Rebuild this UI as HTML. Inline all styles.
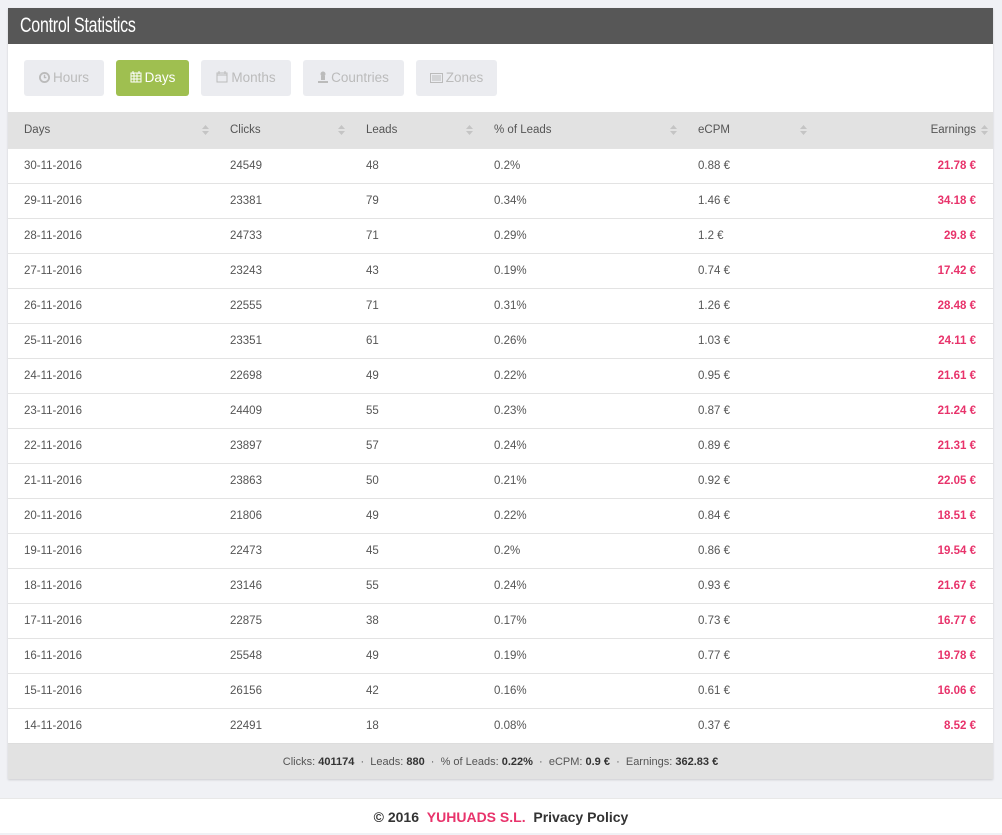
<!DOCTYPE html>
<html><head><meta charset="utf-8"><style>
*{box-sizing:border-box;margin:0;padding:0}
body{width:1002px;height:833px;background:#f0f1f5;font-family:"Liberation Sans",sans-serif;font-size:11.5px;color:#555;position:relative;overflow:hidden}
.panel{position:absolute;left:8px;top:8px;width:985px;background:#fff;box-shadow:0 1px 2px rgba(0,0,0,.15)}
.hdr{height:36px;background:#575757;color:#fff;font-size:21px;line-height:36px;padding-left:12px;position:relative}
.hdr span{display:inline-block;transform:scaleX(0.76);transform-origin:0 50%;letter-spacing:-0.3px}
.btns{height:68px;position:relative}
.b{position:absolute;top:16px;height:36px;border-radius:3px;background:#ebecf0;color:#bbb;font-size:13.5px;line-height:36px;text-align:center}
.b svg{vertical-align:-1px;margin-right:3px}
.b.on{background:#9fbf50;color:#fff}
table{width:985px;border-collapse:collapse;table-layout:fixed}
th{background:#e2e2e2;height:36px;font-weight:normal;text-align:left;color:#555;position:relative;padding-left:16px}
td{height:35px;border-top:1px solid #e3e3e3;padding-left:16px}
.s{position:absolute;top:12px;right:5px;width:7px;height:12px}
td.e,th.e{text-align:right;padding-right:17px;padding-left:0}
td.e{color:#e8336b;font-weight:bold}
.sum{height:36px;background:#e2e2e2;text-align:center;line-height:36px;color:#555;border-top:1px solid #ddd;font-size:11px}
.sum b{color:#333}
.foot{position:absolute;left:0;top:798px;width:1002px;height:35px;background:#fff;border-top:1px solid #e8e8e8;text-align:center;font-size:14px;font-weight:bold;color:#333;line-height:36px}
.foot span{color:#e8336b}
</style></head><body>
<div class="panel">
<div class="hdr"><span>Control Statistics</span></div>
<div class="btns">
<div class="b" style="left:16px;width:80px"><svg width="11" height="11" viewBox="0 0 12 12"><circle cx="6" cy="6" r="5" fill="none" stroke="#bbb" stroke-width="2"/><path d="M6 3v3h2" stroke="#bbb" stroke-width="1.5" fill="none"/></svg>Hours</div>
<div class="b on" style="left:108px;width:73px"><svg width="12" height="12" viewBox="0 0 12 12"><rect x="1" y="2" width="10" height="9" fill="none" stroke="#fff"/><path d="M1 5h10M1 8h10M4 2v9M7 2v9M3 0v3M9 0v3" stroke="#fff"/></svg>Days</div>
<div class="b" style="left:193px;width:90px"><svg width="12" height="12" viewBox="0 0 12 12"><rect x="1" y="2" width="10" height="9" fill="none" stroke="#bbb"/><path d="M1 4h10M3 0v3M9 0v3" stroke="#bbb"/></svg>Months</div>
<div class="b" style="left:295px;width:101px"><svg width="10" height="12" viewBox="0 0 10 12"><circle cx="5" cy="3" r="2.5" fill="#bbb"/><path d="M3 5h4v4H3zM0 10h10v2H0z" fill="#bbb"/></svg>Countries</div>
<div class="b" style="left:408px;width:81px"><svg width="13" height="10" viewBox="0 0 13 10"><rect x=".5" y=".5" width="12" height="9" fill="none" stroke="#bbb"/><path d="M2 3h9M2 5h9M2 7h9" stroke="#bbb"/></svg>Zones</div>
</div>
<table>
<colgroup><col style="width:206px"><col style="width:136px"><col style="width:128px"><col style="width:204px"><col style="width:130px"><col></colgroup>
<tr><th>Days<svg class="s" viewBox="0 0 7 12"><path d="M0 5L3.5 1 7 5zM0 7l3.5 4L7 7z" fill="#c4c4c4"/></svg></th>
<th>Clicks<svg class="s" viewBox="0 0 7 12"><path d="M0 5L3.5 1 7 5zM0 7l3.5 4L7 7z" fill="#c4c4c4"/></svg></th>
<th>Leads<svg class="s" viewBox="0 0 7 12"><path d="M0 5L3.5 1 7 5zM0 7l3.5 4L7 7z" fill="#c4c4c4"/></svg></th>
<th>% of Leads<svg class="s" viewBox="0 0 7 12"><path d="M0 5L3.5 1 7 5zM0 7l3.5 4L7 7z" fill="#c4c4c4"/></svg></th>
<th>eCPM<svg class="s" viewBox="0 0 7 12"><path d="M0 5L3.5 1 7 5zM0 7l3.5 4L7 7z" fill="#c4c4c4"/></svg></th>
<th class="e">Earnings<svg class="s" viewBox="0 0 7 12"><path d="M0 5L3.5 1 7 5zM0 7l3.5 4L7 7z" fill="#c4c4c4"/></svg></th></tr>
<tr><td>30-11-2016</td><td>24549</td><td>48</td><td>0.2%</td><td>0.88 €</td><td class="e">21.78 €</td></tr>
<tr><td>29-11-2016</td><td>23381</td><td>79</td><td>0.34%</td><td>1.46 €</td><td class="e">34.18 €</td></tr>
<tr><td>28-11-2016</td><td>24733</td><td>71</td><td>0.29%</td><td>1.2 €</td><td class="e">29.8 €</td></tr>
<tr><td>27-11-2016</td><td>23243</td><td>43</td><td>0.19%</td><td>0.74 €</td><td class="e">17.42 €</td></tr>
<tr><td>26-11-2016</td><td>22555</td><td>71</td><td>0.31%</td><td>1.26 €</td><td class="e">28.48 €</td></tr>
<tr><td>25-11-2016</td><td>23351</td><td>61</td><td>0.26%</td><td>1.03 €</td><td class="e">24.11 €</td></tr>
<tr><td>24-11-2016</td><td>22698</td><td>49</td><td>0.22%</td><td>0.95 €</td><td class="e">21.61 €</td></tr>
<tr><td>23-11-2016</td><td>24409</td><td>55</td><td>0.23%</td><td>0.87 €</td><td class="e">21.24 €</td></tr>
<tr><td>22-11-2016</td><td>23897</td><td>57</td><td>0.24%</td><td>0.89 €</td><td class="e">21.31 €</td></tr>
<tr><td>21-11-2016</td><td>23863</td><td>50</td><td>0.21%</td><td>0.92 €</td><td class="e">22.05 €</td></tr>
<tr><td>20-11-2016</td><td>21806</td><td>49</td><td>0.22%</td><td>0.84 €</td><td class="e">18.51 €</td></tr>
<tr><td>19-11-2016</td><td>22473</td><td>45</td><td>0.2%</td><td>0.86 €</td><td class="e">19.54 €</td></tr>
<tr><td>18-11-2016</td><td>23146</td><td>55</td><td>0.24%</td><td>0.93 €</td><td class="e">21.67 €</td></tr>
<tr><td>17-11-2016</td><td>22875</td><td>38</td><td>0.17%</td><td>0.73 €</td><td class="e">16.77 €</td></tr>
<tr><td>16-11-2016</td><td>25548</td><td>49</td><td>0.19%</td><td>0.77 €</td><td class="e">19.78 €</td></tr>
<tr><td>15-11-2016</td><td>26156</td><td>42</td><td>0.16%</td><td>0.61 €</td><td class="e">16.06 €</td></tr>
<tr><td>14-11-2016</td><td>22491</td><td>18</td><td>0.08%</td><td>0.37 €</td><td class="e">8.52 €</td></tr>
</table>
<div class="sum">Clicks: <b>401174</b> &nbsp;·&nbsp; Leads: <b>880</b> &nbsp;·&nbsp; % of Leads: <b>0.22%</b> &nbsp;·&nbsp; eCPM: <b>0.9 €</b> &nbsp;·&nbsp; Earnings: <b>362.83 €</b></div>
</div>
<div class="foot">© 2016 &nbsp;<span>YUHUADS S.L.</span>&nbsp; Privacy Policy</div>
</body></html>
